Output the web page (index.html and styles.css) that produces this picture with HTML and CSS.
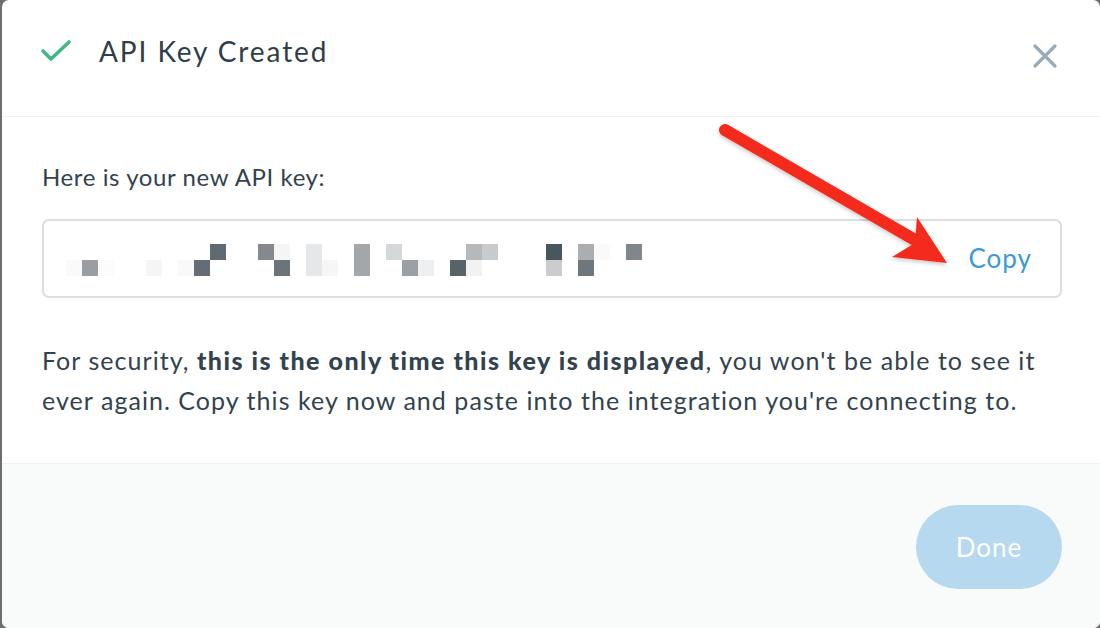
FILE: index.html
```html
<!DOCTYPE html>
<html>
<head>
<meta charset="utf-8">
<link rel="stylesheet" href="styles.css">
</head>
<body>
<div class="modal">
  <header class="head">
    <div class="title-wrap">
      <svg class="check" width="32" height="24" viewBox="0 0 32 24"><path d="M3 12 L11 20 L29 3" fill="none" stroke="#3dba84" stroke-width="3.6" stroke-linecap="round" stroke-linejoin="round"/></svg>
      <h1 class="title">API Key Created</h1>
    </div>
    <svg class="close" width="26" height="26" viewBox="0 0 26 26"><path d="M3 3 L23 23 M23 3 L3 23" fill="none" stroke="#9aabb8" stroke-width="3.2" stroke-linecap="round"/></svg>
  </header>
  <section class="body">
    <p class="label">Here is your new API key:</p>
    <div class="keybox">
      <div class="key">
        <span style="grid-area:2/1;background:#fafafa"></span>
        <span style="grid-area:2/2;background:#9a9da2"></span>
        <span style="grid-area:2/3;background:#fcfcfc"></span>
        <span style="grid-area:2/6;background:#f5f5f5"></span>
        <span style="grid-area:2/8;background:#f8f9f8"></span>
        <span style="grid-area:2/9;background:#646d75"></span>
        <span style="grid-area:1/10;background:#5f6a72"></span>
        <span style="grid-area:1/13;background:#85898d"></span>
        <span style="grid-area:1/14;background:#f5f5f5"></span>
        <span style="grid-area:2/14;background:#6b737b"></span>
        <span style="grid-area:1/16;background:#e6e7e8"></span>
        <span style="grid-area:2/16;background:#e6e7e8"></span>
        <span style="grid-area:2/17;background:#f5f6f5"></span>
        <span style="grid-area:1/19;background:#a4a7aa"></span>
        <span style="grid-area:2/19;background:#a4a7aa"></span>
        <span style="grid-area:1/21;background:#d5d8d9"></span>
        <span style="grid-area:2/22;background:#9ba0a4"></span>
        <span style="grid-area:2/23;background:#eeeff1"></span>
        <span style="grid-area:2/25;background:#576269"></span>
        <span style="grid-area:1/26;background:#b6b9bc"></span>
        <span style="grid-area:2/26;background:#f1f3f3"></span>
        <span style="grid-area:1/27;background:#c8cbce"></span>
        <span style="grid-area:1/31;background:#48565e"></span>
        <span style="grid-area:2/31;background:#cbcccd"></span>
        <span style="grid-area:1/33;background:#abaeb1"></span>
        <span style="grid-area:2/33;background:#6f777e"></span>
        <span style="grid-area:1/34;background:#fafafa"></span>
        <span style="grid-area:1/36;background:#80878b"></span>
      </div>
      <span class="copy">Copy</span>
    </div>
    <p class="note">For security, <b>this is the only time this key is displayed</b>, you won't be able to see it ever again. Copy this key now and paste into the integration you're connecting to.</p>
  </section>
  <footer class="foot">
    <button class="done">Done</button>
  </footer>
  <svg class="arrow" width="260" height="160" viewBox="0 0 260 160">
    <defs>
      <filter id="sh" x="-20%" y="-20%" width="140%" height="140%">
        <feDropShadow dx="0" dy="2" stdDeviation="2" flood-color="#000" flood-opacity="0.22"/>
      </filter>
    </defs>
    <g filter="url(#sh)" fill="#f42c1f">
      <line x1="15" y1="20" x2="205" y2="130" stroke="#f42c1f" stroke-width="12" stroke-linecap="round"/>
      <polygon points="207,107 237,153 182,147 205,133"/>
    </g>
  </svg>
</div>
</body>
</html>
```

FILE: styles.css
```css
* { box-sizing: border-box; }
html, body { margin: 0; padding: 0; }
body {
  width: 1100px;
  height: 628px;
  overflow: hidden;
  background: #6e6e6e;
  font-family: "Lato", "Open Sans", sans-serif;
  color: #33434e;
}
.modal {
  position: relative;
  margin-left: 2px;
  width: 1098px;
  height: 628px;
  background: #fff;
  border-radius: 7px;
  overflow: hidden;
  display: flex;
  flex-direction: column;
}
.head {
  height: 117px;
  border-bottom: 1px solid #eef2f3;
  display: flex;
  align-items: center;
  justify-content: space-between;
  padding: 0 42px 0 38px;
}
.title-wrap {
  display: flex;
  align-items: center;
  gap: 27px;
  margin-top: -14px;
}
.check { display: block; }
.title {
  margin: 0;
  font-size: 28px;
  font-weight: 400;
  color: #2f3e48;
  letter-spacing: 1.9px;
}
.close { display: block; margin-top: -4px; }
.body {
  height: 347px;
  border-bottom: 1px solid #eef2f3;
  padding: 45px 38px 0 40px;
}
.label {
  margin: 0 0 27px 0;
  font-size: 24px;
  line-height: 30px;
  letter-spacing: 0.6px;
}
.keybox {
  height: 79px;
  border: 2px solid #d8e0e3;
  border-radius: 7px;
  display: flex;
  align-items: center;
  justify-content: space-between;
  padding: 0 28px 0 22px;
}
.key {
  display: grid;
  grid-template-columns: repeat(36, 16px);
  grid-template-rows: repeat(2, 16px);
  margin-top: 2px;
}
.copy {
  color: #3a9ad9;
  font-size: 26px;
  letter-spacing: 1px;
  margin-top: -2px;
}
.note {
  margin: 42px 0 0 0;
  font-size: 25px;
  line-height: 40px;
  letter-spacing: 1.05px;
}
.note b { font-weight: 900; letter-spacing: 1.5px; }
.foot {
  flex: 1;
  background: #f9fbfb;
  display: flex;
  justify-content: flex-end;
  align-items: flex-start;
  padding: 41px 38px 0 0;
}
.done {
  width: 146px;
  height: 84px;
  border: none;
  border-radius: 42px;
  background: #b6d9ef;
  color: #fff;
  font-family: inherit;
  font-size: 26px;
  letter-spacing: 1px;
}
.arrow {
  position: absolute;
  left: 708px;
  top: 110px;
}
```
